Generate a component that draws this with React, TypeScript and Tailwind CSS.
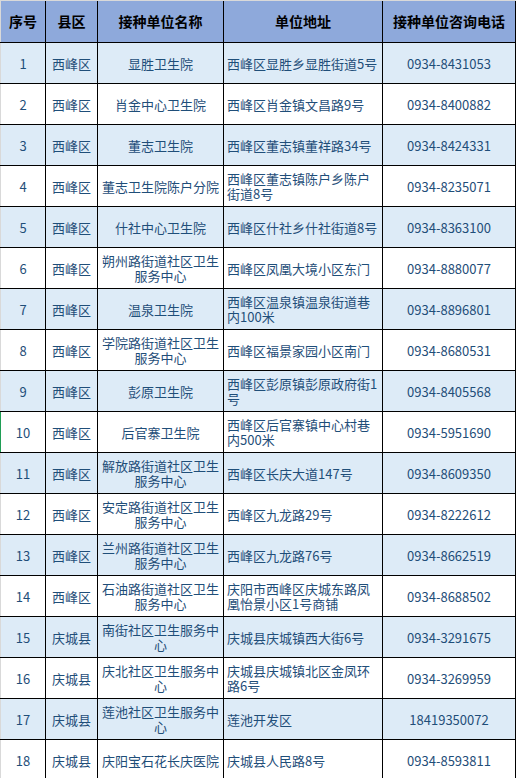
import React from "react";

type Row = {
  n: string;
  county: string;
  name: string[];
  addr: string[];
  phone: string;
};

const rows: Row[] = [
  { n: "1", county: "西峰区", name: ["显胜卫生院"], addr: ["西峰区显胜乡显胜街道5号"], phone: "0934-8431053" },
  { n: "2", county: "西峰区", name: ["肖金中心卫生院"], addr: ["西峰区肖金镇文昌路9号"], phone: "0934-8400882" },
  { n: "3", county: "西峰区", name: ["董志卫生院"], addr: ["西峰区董志镇董祥路34号"], phone: "0934-8424331" },
  { n: "4", county: "西峰区", name: ["董志卫生院陈户分院"], addr: ["西峰区董志镇陈户乡陈户", "街道8号"], phone: "0934-8235071" },
  { n: "5", county: "西峰区", name: ["什社中心卫生院"], addr: ["西峰区什社乡什社街道8号"], phone: "0934-8363100" },
  { n: "6", county: "西峰区", name: ["朔州路街道社区卫生", "服务中心"], addr: ["西峰区凤凰大境小区东门"], phone: "0934-8880077" },
  { n: "7", county: "西峰区", name: ["温泉卫生院"], addr: ["西峰区温泉镇温泉街道巷", "内100米"], phone: "0934-8896801" },
  { n: "8", county: "西峰区", name: ["学院路街道社区卫生", "服务中心"], addr: ["西峰区福景家园小区南门"], phone: "0934-8680531" },
  { n: "9", county: "西峰区", name: ["彭原卫生院"], addr: ["西峰区彭原镇彭原政府街1", "号"], phone: "0934-8405568" },
  { n: "10", county: "西峰区", name: ["后官寨卫生院"], addr: ["西峰区后官寨镇中心村巷", "内500米"], phone: "0934-5951690" },
  { n: "11", county: "西峰区", name: ["解放路街道社区卫生", "服务中心"], addr: ["西峰区长庆大道147号"], phone: "0934-8609350" },
  { n: "12", county: "西峰区", name: ["安定路街道社区卫生", "服务中心"], addr: ["西峰区九龙路29号"], phone: "0934-8222612" },
  { n: "13", county: "西峰区", name: ["兰州路街道社区卫生", "服务中心"], addr: ["西峰区九龙路76号"], phone: "0934-8662519" },
  { n: "14", county: "西峰区", name: ["石油路街道社区卫生", "服务中心"], addr: ["庆阳市西峰区庆城东路凤", "凰怡景小区1号商铺"], phone: "0934-8688502" },
  { n: "15", county: "庆城县", name: ["南街社区卫生服务中", "心"], addr: ["庆城县庆城镇西大街6号"], phone: "0934-3291675" },
  { n: "16", county: "庆城县", name: ["庆北社区卫生服务中", "心"], addr: ["庆城县庆城镇北区金凤环", "路6号"], phone: "0934-3269959" },
  { n: "17", county: "庆城县", name: ["莲池社区卫生服务中", "心"], addr: ["莲池开发区"], phone: "18419350072" },
  { n: "18", county: "庆城县", name: ["庆阳宝石花长庆医院"], addr: ["庆城县人民路8号"], phone: "0934-8593811" },
];

const grid = "grid grid-cols-[44px_51px_125px_158px_132px] gap-x-px bg-black pr-px";

function Lines({ lines }: { lines: string[] }) {
  return (
    <>
      {lines.map((l, i) => (
        <div key={i} className="whitespace-nowrap">
          {l}
        </div>
      ))}
    </>
  );
}

export default function App() {
  return (
    <div
      className="w-[518px] h-[778px] overflow-hidden bg-white"
      style={{ fontFamily: '"Noto Sans CJK SC", "Noto Sans", sans-serif' }}
    >
      <div className="w-[516px] border-t border-[#d9d9d9]">
        <div className="flex border-b border-black">
          <div className="w-px bg-[#d9d9d9]" />
          <div className={grid}>
            {["序号", "县区", "接种单位名称", "单位地址", "接种单位咨询电话"].map((h) => (
              <div
                key={h}
                className="h-[41px] bg-[#8ea9db] flex items-center justify-center text-[14px] font-bold text-black whitespace-nowrap"
              >
                {h}
              </div>
            ))}
          </div>
        </div>
        {rows.map((r, i) => {
          const bg = i % 2 === 0 ? "bg-[#ddebf7]" : "bg-white";
          return (
            <div key={r.n} className="flex border-b border-black">
              <div className={r.n === "10" ? "w-px bg-[#1f9d55]" : "w-px bg-[#d9d9d9]"} />
              <div className={`${grid} text-[13px] leading-[15px] text-[#1f4e79]`}>
                <div className={`h-[40px] ${bg} flex items-center justify-center`}>{r.n}</div>
                <div className={`h-[40px] ${bg} flex items-center justify-center`}>{r.county}</div>
                <div className={`h-[40px] ${bg} flex flex-col items-center justify-center text-center`}>
                  <Lines lines={r.name} />
                </div>
                <div className={`h-[40px] ${bg} flex flex-col justify-center pl-[3px]`}>
                  <Lines lines={r.addr} />
                </div>
                <div className={`h-[40px] ${bg} flex items-center justify-center`}>{r.phone}</div>
              </div>
            </div>
          );
        })}
      </div>
    </div>
  );
}
